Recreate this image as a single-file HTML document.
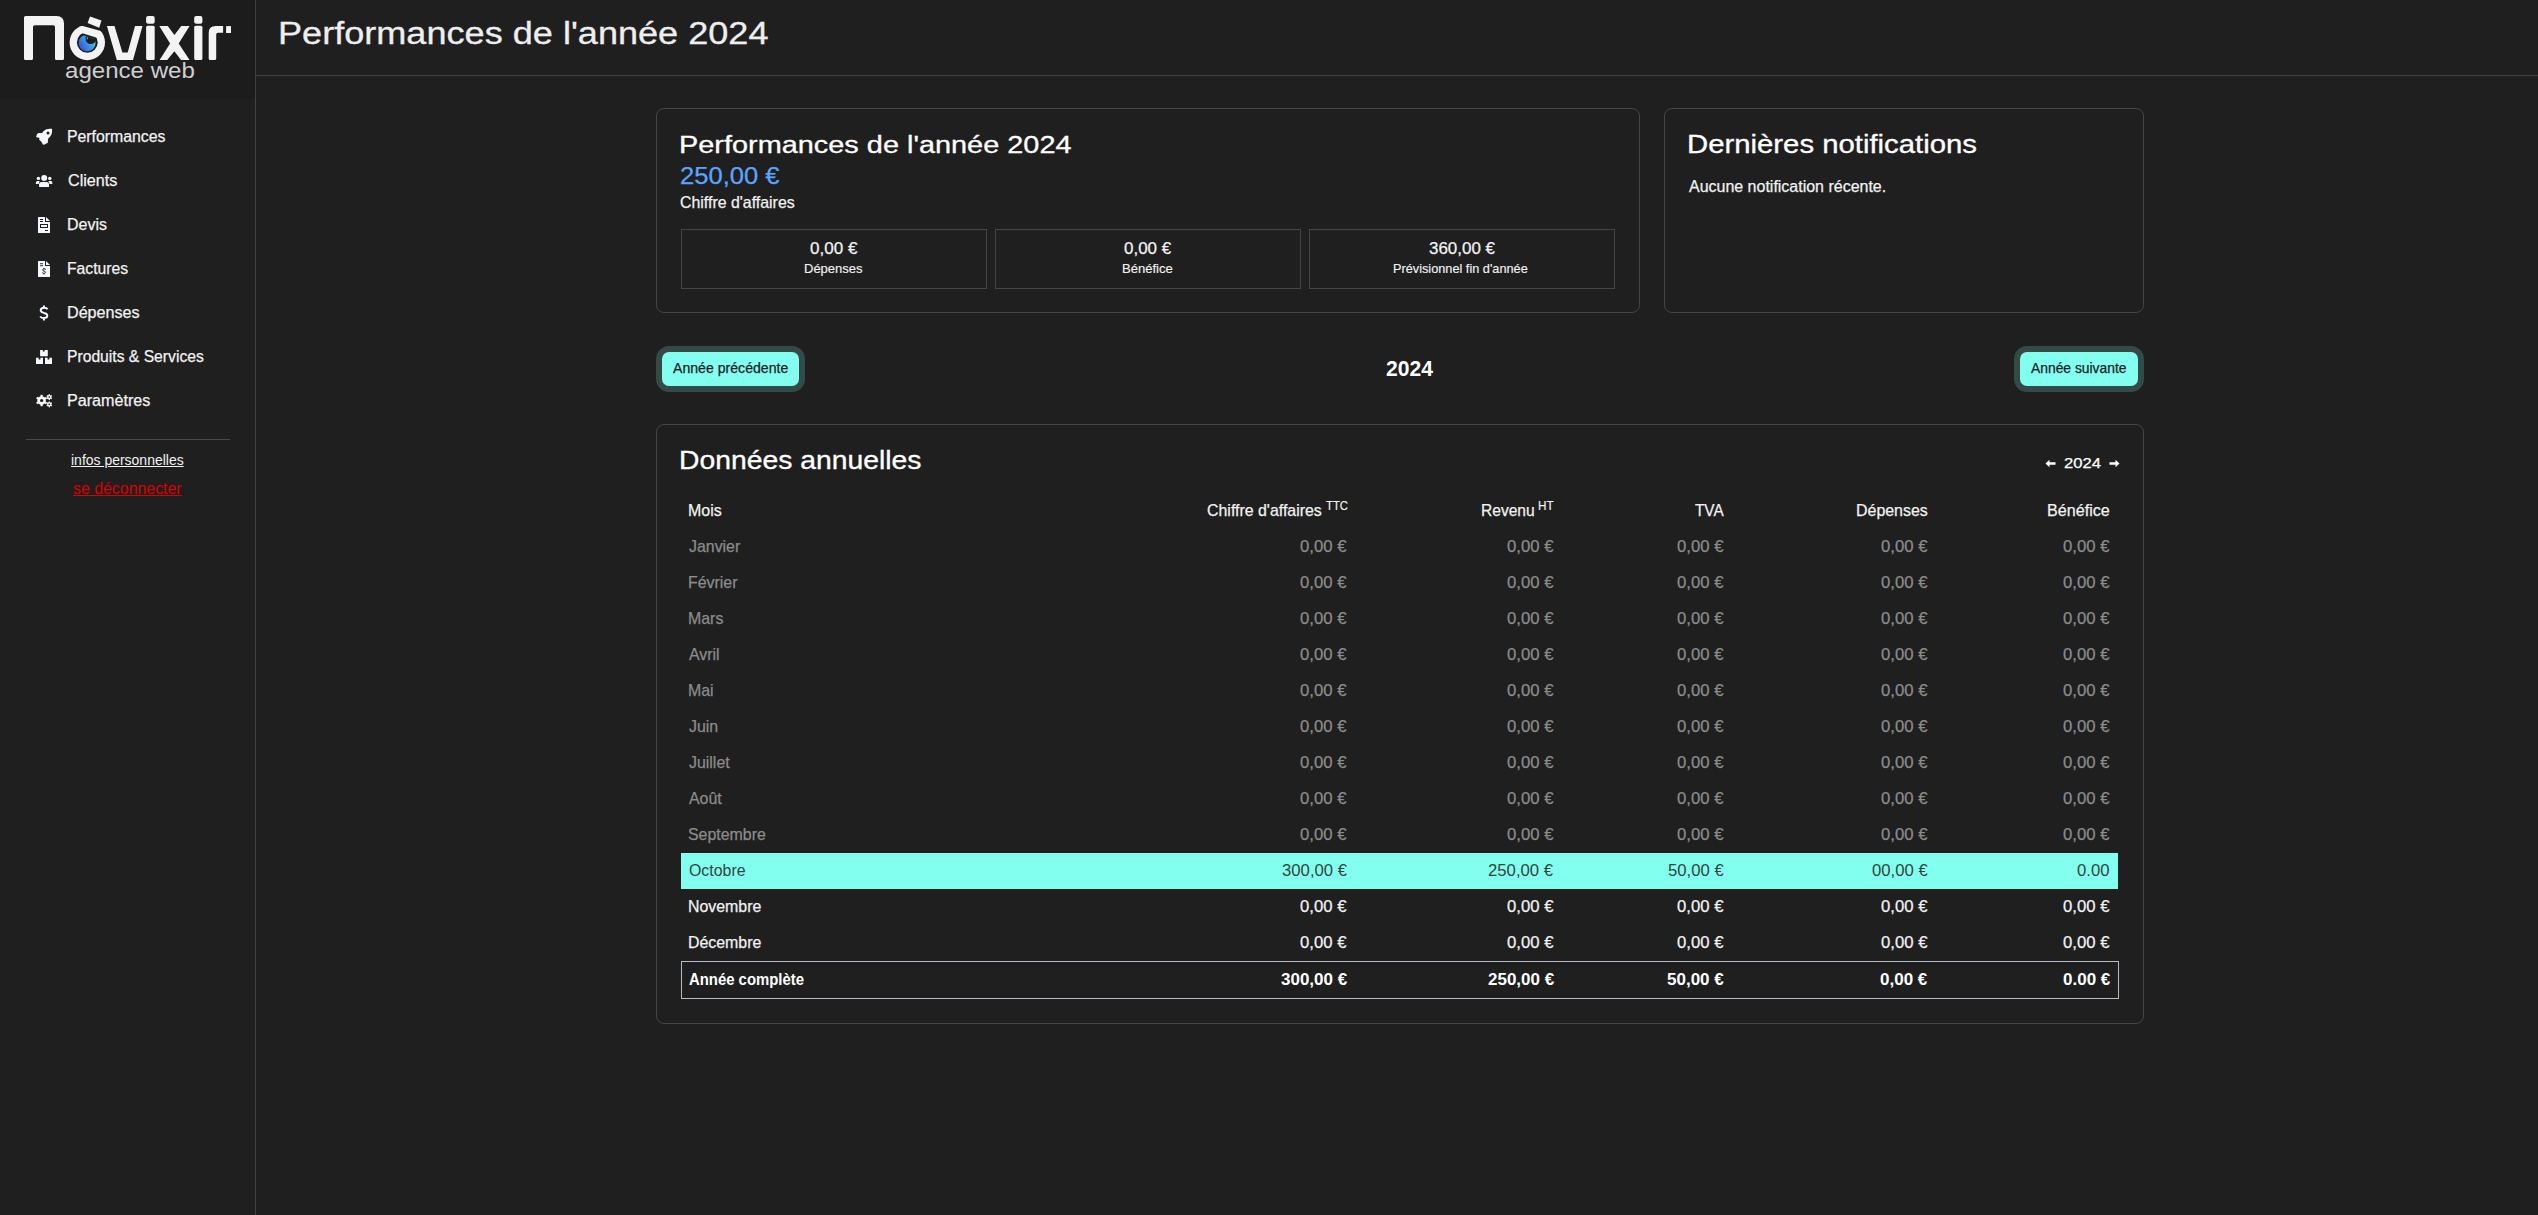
<!DOCTYPE html>
<html lang="fr">
<head>
<meta charset="utf-8">
<title>Performances de l'année 2024</title>
<style>
html,body{margin:0;padding:0;}
body{width:2538px;height:1215px;overflow:hidden;background:#1f1f1f;position:relative;font-family:"Liberation Sans",sans-serif;}
.t{position:absolute;white-space:pre;transform-origin:0 0;}
.abs{position:absolute;box-sizing:border-box;}
.logo-bg{left:0;top:0;width:255px;height:99px;background:#1c1c1c;}
.vline{left:255px;top:0;width:1px;height:1215px;background:#3f4242;}
.hline{left:256px;top:75px;width:2282px;height:1px;background:#3f4242;}
.card{border:1px solid #434648;border-radius:8px;}
.stat{border:1px solid #434648;}
.btn{background:#82ffee;border-radius:7px;box-shadow:0 0 0 6px #334a47;}
.hl{background:#82ffee;}
.tot{border:1px solid #b4bcc8;}
.sep{left:26px;top:439px;width:204px;height:1px;background:#4a4a4a;}
svg{position:absolute;overflow:visible;}
</style>
</head>
<body>
<div class="abs logo-bg"></div>
<div class="abs vline"></div>
<div class="abs hline"></div>

<!-- logo -->
<svg style="left:0;top:0" width="255" height="99" viewBox="0 0 255 99">
  <defs>
    <linearGradient id="iris" x1="0" y1="1" x2="1" y2="0.3">
      <stop offset="0" stop-color="#3a3fd4"/>
      <stop offset="1" stop-color="#3fd2e8"/>
    </linearGradient>
  </defs>
  <g fill="#f3f3f3">
    <!-- N -->
    <path d="M24,58.5 V17.5 Q24,16 25.5,16 H56.5 Q64,16 64,23.5 V58.5 Q64,60 62.5,60 H56.5 Q55,60 55,58.5 V27 Q55,25.2 53.2,25.2 H34.8 Q33,25.2 33,27 V58.5 Q33,60 31.5,60 H25.5 Q24,60 24,58.5 Z"/>
    <!-- v -->
    <path d="M106.9,26.1 H114.5 L122.4,52.5 H127.7 L135,26.1 H142.5 L133,60 H116.8 Z"/>
    <!-- i -->
    <rect x="146.1" y="15.9" width="8.6" height="7.9" rx="2"/>
    <rect x="146.1" y="25.8" width="8.6" height="34.2" rx="1.5"/>
    <!-- x -->
    <path d="M159.3,26.1 H167.8 L174.4,35 L181.3,26.1 H189.6 L178.7,43.6 L189.6,60 H181 L174.4,51.2 L167.2,60 H159.6 L170.1,43.6 Z"/>
    <!-- i -->
    <rect x="194.2" y="15.9" width="8.2" height="7.9" rx="2"/>
    <rect x="194.2" y="25.8" width="8.2" height="34.2" rx="1.5"/>
    <!-- r -->
    <path d="M208.7,58.5 V33 Q208.7,26.1 215.6,26.1 H223.1 V32.7 H218 Q216.2,32.7 216.2,34.5 V58.5 Q216.2,60 214.7,60 H210.2 Q208.7,60 208.7,58.5 Z"/>
    <rect x="226.1" y="26.1" width="4.9" height="6.9"/>
  </g>
  <defs>
    <clipPath id="ringclip"><path d="M50,17.05 L130,38.97 L130,80 L50,80 Z"/></clipPath>
    <clipPath id="holeflat"><path d="M60,26.18 L120,45.08 L120,80 L60,80 Z"/></clipPath>
    <clipPath id="irisflat"><path d="M60,27.9 L120,46.8 L120,80 L60,80 Z"/></clipPath>
  </defs>
  <g clip-path="url(#ringclip)">
    <circle cx="87.3" cy="42.5" r="17.7" fill="#f3f3f3"/>
  </g>
  <circle cx="87.3" cy="42.4" r="10.4" fill="#1c1c1c" clip-path="url(#holeflat)"/>
  <g clip-path="url(#irisflat)">
    <circle cx="87.1" cy="42.9" r="8.5" fill="url(#iris)"/>
    <circle cx="90.8" cy="38.8" r="5.3" fill="#1c1c1c"/>
    <circle cx="87.5" cy="37.2" r="0.6" fill="#3fb0e8"/>
    <circle cx="87.3" cy="38.7" r="0.7" fill="#3fb0e8"/>
  </g>
  <path d="M90,16.5 L101.5,20.6 L99.2,27.8 L87.6,23.1 Z" fill="#f3f3f3"/>
</svg>

<!-- sidebar icons -->
<svg style="left:32px;top:125px" width="24" height="24" viewBox="0 0 24 24">
  <path fill="#f4f7fb" d="M20,3.7 C17.5,3.6 15.2,3.9 13.8,4.6 L11.1,6.5 L10.3,7.9 L6.5,8.1 L5.1,9.1 L4,11.9 L7.5,13 L7.1,14.4 L9.3,16.8 L11.1,19.8 L12.6,19.6 L15.8,17.8 L16.2,13.4 L17.8,11.9 C18.9,10.6 19.5,9.5 19.8,8.3 C20.2,6.6 20.2,5 20,3.7 Z"/>
  <circle cx="16" cy="8.1" r="1.5" fill="#1f1f1f"/>
</svg>
<svg style="left:36px;top:175px" width="16" height="12" viewBox="0 0 16 12">
  <g fill="#f4f7fb">
    <circle cx="8.2" cy="3.1" r="3"/>
    <path d="M3.1,12 L3.1,9.2 C3.1,7.8 4.2,6.9 5.6,6.9 L10.6,6.9 C12,6.9 13,7.8 13,9.2 L13,12 Z"/>
    <circle cx="2.4" cy="3.4" r="1.7"/>
    <circle cx="13.8" cy="3.4" r="1.7"/>
    <path d="M-0.1,9 L-0.1,7.6 C-0.1,6.6 0.7,5.9 1.8,5.9 L3.9,5.9 C3.2,6.6 2.8,7.6 2.7,9 Z"/>
    <path d="M16.3,9 L16.3,7.6 C16.3,6.6 15.5,5.9 14.4,5.9 L12.3,5.9 C13,6.6 13.4,7.6 13.5,9 Z"/>
  </g>
</svg>
<svg style="left:38px;top:217px" width="12" height="16" viewBox="0 0 12 16">
  <path fill="#f4f7fb" d="M0.6,0 H7 V5 H12 V15.4 Q12,16 11.4,16 H0.6 Q0,16 0,15.4 V0.6 Q0,0 0.6,0 Z M8,0 L12,4 H8 Z"/>
  <g fill="#1f1f1f">
    <rect x="2" y="2" width="3" height="1"/>
    <rect x="2" y="4" width="3" height="1"/>
    <path fill-rule="evenodd" d="M2,7 H10 V11 H2 Z M3,8 V10 H9 V8 Z"/>
    <rect x="7" y="13" width="3" height="1"/>
  </g>
</svg>
<svg style="left:38px;top:261px" width="12" height="16" viewBox="0 0 12 16">
  <path fill="#f4f7fb" d="M0.6,0 H7 V5 H12 V15.4 Q12,16 11.4,16 H0.6 Q0,16 0,15.4 V0.6 Q0,0 0.6,0 Z M8,0 L12,4 H8 Z"/>
  <g fill="#1f1f1f">
    <rect x="2" y="2.3" width="3" height="0.9"/>
    <rect x="2" y="4.3" width="3" height="0.9"/>
  </g>
  <path d="M7.8,8.6 C7.4,8.1 6.8,7.9 6.1,7.9 C5.2,7.9 4.6,8.4 4.6,9 C4.6,9.7 5.3,9.9 6,10.1 C6.8,10.3 7.5,10.5 7.5,11.3 C7.5,12 6.9,12.4 6,12.4 C5.3,12.4 4.7,12.1 4.3,11.7 M6,7 V7.9 M6,12.4 V13.4" stroke="#1f1f1f" stroke-width="1" fill="none"/>
</svg>
<svg style="left:39px;top:305px" width="10" height="16" viewBox="0 0 10 16">
  <path d="M8.6,4.2 C8,3.3 6.9,2.8 5.1,2.8 C3,2.8 1.7,3.8 1.7,5.3 C1.7,7 3.3,7.5 5,7.9 C7,8.3 8.3,8.9 8.3,10.6 C8.3,12.1 7,13.1 4.9,13.1 C3.2,13.1 1.9,12.5 1.1,11.5 M4.9,0.4 V2.8 M4.9,13.1 V15.6" stroke="#f4f7fb" stroke-width="2" fill="none"/>
</svg>
<svg style="left:36px;top:350px" width="16" height="14" viewBox="0 0 16 14">
  <g fill="#f4f7fb">
    <path d="M4.1,0 H6.8 V1.6 H8.6 V0 H11.8 V6.2 H4.1 Z"/>
    <path d="M0,7.8 H2.6 V9.4 H4.4 V7.8 H7 V14 H0 Z"/>
    <path d="M9,7.8 H11.6 V9.4 H13.4 V7.8 H16 V14 H9 Z"/>
  </g>
</svg>
<svg style="left:36px;top:394px" width="16" height="13" viewBox="0 0 16 13">
  <g fill="#f4f7fb">
    <g transform="translate(5.6 6.5)">
      <circle r="4.3"/>
      <rect x="-1.1" y="-5.7" width="2.2" height="11.4"/>
      <rect x="-1.1" y="-5.7" width="2.2" height="11.4" transform="rotate(60)"/>
      <rect x="-1.1" y="-5.7" width="2.2" height="11.4" transform="rotate(120)"/>
      <circle r="1.6" fill="#1f1f1f"/>
    </g>
    <g transform="translate(13.3 3.1)">
      <circle r="2.1"/>
      <rect x="-0.7" y="-2.9" width="1.4" height="5.8"/>
      <rect x="-0.7" y="-2.9" width="1.4" height="5.8" transform="rotate(60)"/>
      <rect x="-0.7" y="-2.9" width="1.4" height="5.8" transform="rotate(120)"/>
      <circle r="0.8" fill="#1f1f1f"/>
    </g>
    <g transform="translate(13.3 10.4)">
      <circle r="2.1"/>
      <rect x="-0.7" y="-2.9" width="1.4" height="5.8"/>
      <rect x="-0.7" y="-2.9" width="1.4" height="5.8" transform="rotate(60)"/>
      <rect x="-0.7" y="-2.9" width="1.4" height="5.8" transform="rotate(120)"/>
      <circle r="0.8" fill="#1f1f1f"/>
    </g>
  </g>
</svg>
<div class="abs sep"></div>

<!-- cards -->
<div class="abs card" style="left:656px;top:108px;width:984px;height:205px;"></div>
<div class="abs stat" style="left:681px;top:229px;width:306px;height:60px;"></div>
<div class="abs stat" style="left:995px;top:229px;width:306px;height:60px;"></div>
<div class="abs stat" style="left:1309px;top:229px;width:306px;height:60px;"></div>
<div class="abs card" style="left:1664px;top:108px;width:480px;height:205px;"></div>

<!-- buttons -->
<div class="abs btn" style="left:662px;top:352px;width:137px;height:34px;"></div>
<div class="abs btn" style="left:2020px;top:352px;width:118px;height:34px;"></div>

<!-- data card -->
<div class="abs card" style="left:656px;top:424px;width:1488px;height:600px;"></div>
<div class="abs hl" style="left:681px;top:853px;width:1437px;height:36px;"></div>
<div class="abs tot" style="left:681px;top:961px;width:1438px;height:38px;"></div>

<!-- arrows -->
<svg style="left:2045px;top:459px" width="11" height="9" viewBox="0 0 11 9">
  <path fill="#ffffff" d="M0.5,4.5 L4.5,0.8 V3.3 H10.5 V5.7 H4.5 V8.2 Z"/>
</svg>
<svg style="left:2109px;top:459px" width="11" height="9" viewBox="0 0 11 9">
  <path fill="#ffffff" d="M10.5,4.5 L6.5,0.8 V3.3 H0.5 V5.7 H6.5 V8.2 Z"/>
</svg>

<span class="t" style="left:277.96px;top:19.20px;font-size:30.8px;line-height:30.8px;font-weight:400;color:#eeeeee;transform:scaleX(1.1721);-webkit-text-stroke:0.3px #eeeeee;">Performances de l&#x27;année 2024</span>
<span class="t" style="left:67.11px;top:129.00px;font-size:16px;line-height:16px;font-weight:400;color:#f2f2f2;transform:scaleX(0.9888);-webkit-text-stroke:0.25px #f2f2f2;">Performances</span>
<span class="t" style="left:68.10px;top:173.00px;font-size:16px;line-height:16px;font-weight:400;color:#f2f2f2;transform:scaleX(1.0084);-webkit-text-stroke:0.25px #f2f2f2;">Clients</span>
<span class="t" style="left:67.10px;top:217.00px;font-size:16px;line-height:16px;font-weight:400;color:#f2f2f2;transform:scaleX(0.9974);-webkit-text-stroke:0.25px #f2f2f2;">Devis</span>
<span class="t" style="left:67.12px;top:261.00px;font-size:16px;line-height:16px;font-weight:400;color:#f2f2f2;transform:scaleX(0.9820);-webkit-text-stroke:0.25px #f2f2f2;">Factures</span>
<span class="t" style="left:67.09px;top:305.00px;font-size:16px;line-height:16px;font-weight:400;color:#f2f2f2;transform:scaleX(1.0084);-webkit-text-stroke:0.25px #f2f2f2;">Dépenses</span>
<span class="t" style="left:67.12px;top:349.00px;font-size:16px;line-height:16px;font-weight:400;color:#f2f2f2;transform:scaleX(0.9797);-webkit-text-stroke:0.25px #f2f2f2;">Produits &amp; Services</span>
<span class="t" style="left:67.09px;top:393.00px;font-size:16px;line-height:16px;font-weight:400;color:#f2f2f2;transform:scaleX(1.0084);-webkit-text-stroke:0.25px #f2f2f2;">Paramètres</span>
<span class="t" style="left:70.60px;top:453.10px;font-size:14px;line-height:14px;font-weight:400;color:#f2f2f2;transform:scaleX(0.9982);text-decoration:underline;">infos personnelles</span>
<span class="t" style="left:73.30px;top:481.10px;font-size:16px;line-height:16px;font-weight:400;color:#d90000;transform:scaleX(0.9927);text-decoration:underline;">se déconnecter</span>
<span class="t" style="left:678.96px;top:132.90px;font-size:24.7px;line-height:24.7px;font-weight:400;color:#ffffff;transform:scaleX(1.1700);-webkit-text-stroke:0.3px #ffffff;">Performances de l&#x27;année 2024</span>
<span class="t" style="left:679.93px;top:164.30px;font-size:24px;line-height:24px;font-weight:400;color:#5ca4ff;transform:scaleX(1.0652);-webkit-text-stroke:0.25px #5ca4ff;">250,00 €</span>
<span class="t" style="left:680.04px;top:194.40px;font-size:16.5px;line-height:16.5px;font-weight:400;color:#f2f2f2;transform:scaleX(0.9636);-webkit-text-stroke:0.25px #f2f2f2;">Chiffre d&#x27;affaires</span>
<span class="t" style="left:809.80px;top:239.50px;font-size:16.5px;line-height:16.5px;font-weight:400;color:#f2f2f2;transform:scaleX(1.0326);-webkit-text-stroke:0.25px #f2f2f2;">0,00 €</span>
<span class="t" style="left:804.00px;top:262.30px;font-size:13px;line-height:13px;font-weight:400;color:#f2f2f2;transform:scaleX(1.0000);-webkit-text-stroke:0.15px #f2f2f2;">Dépenses</span>
<span class="t" style="left:1123.60px;top:239.50px;font-size:16.5px;line-height:16.5px;font-weight:400;color:#f2f2f2;transform:scaleX(1.0283);-webkit-text-stroke:0.25px #f2f2f2;">0,00 €</span>
<span class="t" style="left:1121.90px;top:262.30px;font-size:13px;line-height:13px;font-weight:400;color:#f2f2f2;transform:scaleX(1.0041);-webkit-text-stroke:0.15px #f2f2f2;">Bénéfice</span>
<span class="t" style="left:1428.60px;top:239.50px;font-size:16.5px;line-height:16.5px;font-weight:400;color:#f2f2f2;transform:scaleX(1.0266);-webkit-text-stroke:0.25px #f2f2f2;">360,00 €</span>
<span class="t" style="left:1393.32px;top:262.30px;font-size:13px;line-height:13px;font-weight:400;color:#f2f2f2;transform:scaleX(0.9788);-webkit-text-stroke:0.15px #f2f2f2;">Prévisionnel fin d&#x27;année</span>
<span class="t" style="left:1686.87px;top:132.30px;font-size:25.2px;line-height:25.2px;font-weight:400;color:#ffffff;transform:scaleX(1.1636);-webkit-text-stroke:0.3px #ffffff;">Dernières notifications</span>
<span class="t" style="left:1689.00px;top:179.40px;font-size:16px;line-height:16px;font-weight:400;color:#f2f2f2;transform:scaleX(0.9985);-webkit-text-stroke:0.25px #f2f2f2;">Aucune notification récente.</span>
<span class="t" style="left:672.60px;top:360.80px;font-size:14px;line-height:14px;font-weight:400;color:#1c1c2a;transform:scaleX(1.0079);-webkit-text-stroke:0.25px #1c1c2a;">Année précédente</span>
<span class="t" style="left:1385.80px;top:358.80px;font-size:21.5px;line-height:21.5px;font-weight:700;color:#ffffff;transform:scaleX(0.9792);">2024</span>
<span class="t" style="left:2031.00px;top:360.90px;font-size:14px;line-height:14px;font-weight:400;color:#1c1c2a;transform:scaleX(0.9896);-webkit-text-stroke:0.25px #1c1c2a;">Année suivante</span>
<span class="t" style="left:678.75px;top:447.80px;font-size:25.2px;line-height:25.2px;font-weight:400;color:#ffffff;transform:scaleX(1.1239);-webkit-text-stroke:0.3px #ffffff;">Données annuelles</span>
<span class="t" style="left:2064.10px;top:455.00px;font-size:15.2px;line-height:15.2px;font-weight:400;color:#ffffff;transform:scaleX(1.0941);-webkit-text-stroke:0.25px #ffffff;">2024</span>
<span class="t" style="left:688.03px;top:502.00px;font-size:16.4px;line-height:16.4px;font-weight:400;color:#f2f2f2;transform:scaleX(0.9735);-webkit-text-stroke:0.25px #f2f2f2;">Mois</span>
<span class="t" style="left:1206.73px;top:502.00px;font-size:16.4px;line-height:16.4px;font-weight:400;color:#f2f2f2;transform:scaleX(0.9709);-webkit-text-stroke:0.25px #f2f2f2;">Chiffre d&#x27;affaires</span>
<span class="t" style="left:1326.00px;top:500.10px;font-size:12px;line-height:12px;font-weight:400;color:#f2f2f2;transform:scaleX(0.9435);-webkit-text-stroke:0.15px #f2f2f2;">TTC</span>
<span class="t" style="left:1481.05px;top:502.00px;font-size:16.4px;line-height:16.4px;font-weight:400;color:#f2f2f2;transform:scaleX(0.9491);-webkit-text-stroke:0.25px #f2f2f2;">Revenu</span>
<span class="t" style="left:1538.02px;top:500.00px;font-size:12px;line-height:12px;font-weight:400;color:#f2f2f2;transform:scaleX(0.9800);-webkit-text-stroke:0.15px #f2f2f2;">HT</span>
<span class="t" style="left:1695.00px;top:502.00px;font-size:16.4px;line-height:16.4px;font-weight:400;color:#f2f2f2;transform:scaleX(0.9355);-webkit-text-stroke:0.25px #f2f2f2;">TVA</span>
<span class="t" style="left:1855.73px;top:502.00px;font-size:16.4px;line-height:16.4px;font-weight:400;color:#f2f2f2;transform:scaleX(0.9726);-webkit-text-stroke:0.25px #f2f2f2;">Dépenses</span>
<span class="t" style="left:2046.82px;top:502.00px;font-size:16.4px;line-height:16.4px;font-weight:400;color:#f2f2f2;transform:scaleX(0.9841);-webkit-text-stroke:0.25px #f2f2f2;">Bénéfice</span>
<span class="t" style="left:64.66px;top:59.50px;font-size:21.2px;line-height:21.2px;font-weight:400;color:#cfcfcf;transform:scaleX(1.1363);">agence web</span>
<span class="t" style="left:689.20px;top:538.20px;font-size:16.4px;line-height:16.4px;font-weight:400;color:#8c8c8c;transform:scaleX(0.9699);-webkit-text-stroke:0.25px #8c8c8c;">Janvier</span>
<span class="t" style="left:1300.20px;top:538.20px;font-size:16.4px;line-height:16.4px;font-weight:400;color:#8c8c8c;transform:scaleX(1.0196);-webkit-text-stroke:0.25px #8c8c8c;">0,00 €</span>
<span class="t" style="left:1506.80px;top:538.20px;font-size:16.4px;line-height:16.4px;font-weight:400;color:#8c8c8c;transform:scaleX(1.0196);-webkit-text-stroke:0.25px #8c8c8c;">0,00 €</span>
<span class="t" style="left:1677.10px;top:538.20px;font-size:16.4px;line-height:16.4px;font-weight:400;color:#8c8c8c;transform:scaleX(1.0196);-webkit-text-stroke:0.25px #8c8c8c;">0,00 €</span>
<span class="t" style="left:1880.80px;top:538.20px;font-size:16.4px;line-height:16.4px;font-weight:400;color:#8c8c8c;transform:scaleX(1.0196);-webkit-text-stroke:0.25px #8c8c8c;">0,00 €</span>
<span class="t" style="left:2062.90px;top:538.20px;font-size:16.4px;line-height:16.4px;font-weight:400;color:#8c8c8c;transform:scaleX(1.0196);-webkit-text-stroke:0.25px #8c8c8c;">0,00 €</span>
<span class="t" style="left:688.23px;top:574.20px;font-size:16.4px;line-height:16.4px;font-weight:400;color:#8c8c8c;transform:scaleX(0.9699);-webkit-text-stroke:0.25px #8c8c8c;">Février</span>
<span class="t" style="left:1300.20px;top:574.20px;font-size:16.4px;line-height:16.4px;font-weight:400;color:#8c8c8c;transform:scaleX(1.0196);-webkit-text-stroke:0.25px #8c8c8c;">0,00 €</span>
<span class="t" style="left:1506.80px;top:574.20px;font-size:16.4px;line-height:16.4px;font-weight:400;color:#8c8c8c;transform:scaleX(1.0196);-webkit-text-stroke:0.25px #8c8c8c;">0,00 €</span>
<span class="t" style="left:1677.10px;top:574.20px;font-size:16.4px;line-height:16.4px;font-weight:400;color:#8c8c8c;transform:scaleX(1.0196);-webkit-text-stroke:0.25px #8c8c8c;">0,00 €</span>
<span class="t" style="left:1880.80px;top:574.20px;font-size:16.4px;line-height:16.4px;font-weight:400;color:#8c8c8c;transform:scaleX(1.0196);-webkit-text-stroke:0.25px #8c8c8c;">0,00 €</span>
<span class="t" style="left:2062.90px;top:574.20px;font-size:16.4px;line-height:16.4px;font-weight:400;color:#8c8c8c;transform:scaleX(1.0196);-webkit-text-stroke:0.25px #8c8c8c;">0,00 €</span>
<span class="t" style="left:688.23px;top:610.20px;font-size:16.4px;line-height:16.4px;font-weight:400;color:#8c8c8c;transform:scaleX(0.9699);-webkit-text-stroke:0.25px #8c8c8c;">Mars</span>
<span class="t" style="left:1300.20px;top:610.20px;font-size:16.4px;line-height:16.4px;font-weight:400;color:#8c8c8c;transform:scaleX(1.0196);-webkit-text-stroke:0.25px #8c8c8c;">0,00 €</span>
<span class="t" style="left:1506.80px;top:610.20px;font-size:16.4px;line-height:16.4px;font-weight:400;color:#8c8c8c;transform:scaleX(1.0196);-webkit-text-stroke:0.25px #8c8c8c;">0,00 €</span>
<span class="t" style="left:1677.10px;top:610.20px;font-size:16.4px;line-height:16.4px;font-weight:400;color:#8c8c8c;transform:scaleX(1.0196);-webkit-text-stroke:0.25px #8c8c8c;">0,00 €</span>
<span class="t" style="left:1880.80px;top:610.20px;font-size:16.4px;line-height:16.4px;font-weight:400;color:#8c8c8c;transform:scaleX(1.0196);-webkit-text-stroke:0.25px #8c8c8c;">0,00 €</span>
<span class="t" style="left:2062.90px;top:610.20px;font-size:16.4px;line-height:16.4px;font-weight:400;color:#8c8c8c;transform:scaleX(1.0196);-webkit-text-stroke:0.25px #8c8c8c;">0,00 €</span>
<span class="t" style="left:689.20px;top:646.20px;font-size:16.4px;line-height:16.4px;font-weight:400;color:#8c8c8c;transform:scaleX(0.9699);-webkit-text-stroke:0.25px #8c8c8c;">Avril</span>
<span class="t" style="left:1300.20px;top:646.20px;font-size:16.4px;line-height:16.4px;font-weight:400;color:#8c8c8c;transform:scaleX(1.0196);-webkit-text-stroke:0.25px #8c8c8c;">0,00 €</span>
<span class="t" style="left:1506.80px;top:646.20px;font-size:16.4px;line-height:16.4px;font-weight:400;color:#8c8c8c;transform:scaleX(1.0196);-webkit-text-stroke:0.25px #8c8c8c;">0,00 €</span>
<span class="t" style="left:1677.10px;top:646.20px;font-size:16.4px;line-height:16.4px;font-weight:400;color:#8c8c8c;transform:scaleX(1.0196);-webkit-text-stroke:0.25px #8c8c8c;">0,00 €</span>
<span class="t" style="left:1880.80px;top:646.20px;font-size:16.4px;line-height:16.4px;font-weight:400;color:#8c8c8c;transform:scaleX(1.0196);-webkit-text-stroke:0.25px #8c8c8c;">0,00 €</span>
<span class="t" style="left:2062.90px;top:646.20px;font-size:16.4px;line-height:16.4px;font-weight:400;color:#8c8c8c;transform:scaleX(1.0196);-webkit-text-stroke:0.25px #8c8c8c;">0,00 €</span>
<span class="t" style="left:688.23px;top:682.20px;font-size:16.4px;line-height:16.4px;font-weight:400;color:#8c8c8c;transform:scaleX(0.9699);-webkit-text-stroke:0.25px #8c8c8c;">Mai</span>
<span class="t" style="left:1300.20px;top:682.20px;font-size:16.4px;line-height:16.4px;font-weight:400;color:#8c8c8c;transform:scaleX(1.0196);-webkit-text-stroke:0.25px #8c8c8c;">0,00 €</span>
<span class="t" style="left:1506.80px;top:682.20px;font-size:16.4px;line-height:16.4px;font-weight:400;color:#8c8c8c;transform:scaleX(1.0196);-webkit-text-stroke:0.25px #8c8c8c;">0,00 €</span>
<span class="t" style="left:1677.10px;top:682.20px;font-size:16.4px;line-height:16.4px;font-weight:400;color:#8c8c8c;transform:scaleX(1.0196);-webkit-text-stroke:0.25px #8c8c8c;">0,00 €</span>
<span class="t" style="left:1880.80px;top:682.20px;font-size:16.4px;line-height:16.4px;font-weight:400;color:#8c8c8c;transform:scaleX(1.0196);-webkit-text-stroke:0.25px #8c8c8c;">0,00 €</span>
<span class="t" style="left:2062.90px;top:682.20px;font-size:16.4px;line-height:16.4px;font-weight:400;color:#8c8c8c;transform:scaleX(1.0196);-webkit-text-stroke:0.25px #8c8c8c;">0,00 €</span>
<span class="t" style="left:689.20px;top:718.20px;font-size:16.4px;line-height:16.4px;font-weight:400;color:#8c8c8c;transform:scaleX(0.9699);-webkit-text-stroke:0.25px #8c8c8c;">Juin</span>
<span class="t" style="left:1300.20px;top:718.20px;font-size:16.4px;line-height:16.4px;font-weight:400;color:#8c8c8c;transform:scaleX(1.0196);-webkit-text-stroke:0.25px #8c8c8c;">0,00 €</span>
<span class="t" style="left:1506.80px;top:718.20px;font-size:16.4px;line-height:16.4px;font-weight:400;color:#8c8c8c;transform:scaleX(1.0196);-webkit-text-stroke:0.25px #8c8c8c;">0,00 €</span>
<span class="t" style="left:1677.10px;top:718.20px;font-size:16.4px;line-height:16.4px;font-weight:400;color:#8c8c8c;transform:scaleX(1.0196);-webkit-text-stroke:0.25px #8c8c8c;">0,00 €</span>
<span class="t" style="left:1880.80px;top:718.20px;font-size:16.4px;line-height:16.4px;font-weight:400;color:#8c8c8c;transform:scaleX(1.0196);-webkit-text-stroke:0.25px #8c8c8c;">0,00 €</span>
<span class="t" style="left:2062.90px;top:718.20px;font-size:16.4px;line-height:16.4px;font-weight:400;color:#8c8c8c;transform:scaleX(1.0196);-webkit-text-stroke:0.25px #8c8c8c;">0,00 €</span>
<span class="t" style="left:689.20px;top:754.20px;font-size:16.4px;line-height:16.4px;font-weight:400;color:#8c8c8c;transform:scaleX(0.9699);-webkit-text-stroke:0.25px #8c8c8c;">Juillet</span>
<span class="t" style="left:1300.20px;top:754.20px;font-size:16.4px;line-height:16.4px;font-weight:400;color:#8c8c8c;transform:scaleX(1.0196);-webkit-text-stroke:0.25px #8c8c8c;">0,00 €</span>
<span class="t" style="left:1506.80px;top:754.20px;font-size:16.4px;line-height:16.4px;font-weight:400;color:#8c8c8c;transform:scaleX(1.0196);-webkit-text-stroke:0.25px #8c8c8c;">0,00 €</span>
<span class="t" style="left:1677.10px;top:754.20px;font-size:16.4px;line-height:16.4px;font-weight:400;color:#8c8c8c;transform:scaleX(1.0196);-webkit-text-stroke:0.25px #8c8c8c;">0,00 €</span>
<span class="t" style="left:1880.80px;top:754.20px;font-size:16.4px;line-height:16.4px;font-weight:400;color:#8c8c8c;transform:scaleX(1.0196);-webkit-text-stroke:0.25px #8c8c8c;">0,00 €</span>
<span class="t" style="left:2062.90px;top:754.20px;font-size:16.4px;line-height:16.4px;font-weight:400;color:#8c8c8c;transform:scaleX(1.0196);-webkit-text-stroke:0.25px #8c8c8c;">0,00 €</span>
<span class="t" style="left:689.20px;top:790.20px;font-size:16.4px;line-height:16.4px;font-weight:400;color:#8c8c8c;transform:scaleX(0.9699);-webkit-text-stroke:0.25px #8c8c8c;">Août</span>
<span class="t" style="left:1300.20px;top:790.20px;font-size:16.4px;line-height:16.4px;font-weight:400;color:#8c8c8c;transform:scaleX(1.0196);-webkit-text-stroke:0.25px #8c8c8c;">0,00 €</span>
<span class="t" style="left:1506.80px;top:790.20px;font-size:16.4px;line-height:16.4px;font-weight:400;color:#8c8c8c;transform:scaleX(1.0196);-webkit-text-stroke:0.25px #8c8c8c;">0,00 €</span>
<span class="t" style="left:1677.10px;top:790.20px;font-size:16.4px;line-height:16.4px;font-weight:400;color:#8c8c8c;transform:scaleX(1.0196);-webkit-text-stroke:0.25px #8c8c8c;">0,00 €</span>
<span class="t" style="left:1880.80px;top:790.20px;font-size:16.4px;line-height:16.4px;font-weight:400;color:#8c8c8c;transform:scaleX(1.0196);-webkit-text-stroke:0.25px #8c8c8c;">0,00 €</span>
<span class="t" style="left:2062.90px;top:790.20px;font-size:16.4px;line-height:16.4px;font-weight:400;color:#8c8c8c;transform:scaleX(1.0196);-webkit-text-stroke:0.25px #8c8c8c;">0,00 €</span>
<span class="t" style="left:688.23px;top:826.20px;font-size:16.4px;line-height:16.4px;font-weight:400;color:#8c8c8c;transform:scaleX(0.9699);-webkit-text-stroke:0.25px #8c8c8c;">Septembre</span>
<span class="t" style="left:1300.20px;top:826.20px;font-size:16.4px;line-height:16.4px;font-weight:400;color:#8c8c8c;transform:scaleX(1.0196);-webkit-text-stroke:0.25px #8c8c8c;">0,00 €</span>
<span class="t" style="left:1506.80px;top:826.20px;font-size:16.4px;line-height:16.4px;font-weight:400;color:#8c8c8c;transform:scaleX(1.0196);-webkit-text-stroke:0.25px #8c8c8c;">0,00 €</span>
<span class="t" style="left:1677.10px;top:826.20px;font-size:16.4px;line-height:16.4px;font-weight:400;color:#8c8c8c;transform:scaleX(1.0196);-webkit-text-stroke:0.25px #8c8c8c;">0,00 €</span>
<span class="t" style="left:1880.80px;top:826.20px;font-size:16.4px;line-height:16.4px;font-weight:400;color:#8c8c8c;transform:scaleX(1.0196);-webkit-text-stroke:0.25px #8c8c8c;">0,00 €</span>
<span class="t" style="left:2062.90px;top:826.20px;font-size:16.4px;line-height:16.4px;font-weight:400;color:#8c8c8c;transform:scaleX(1.0196);-webkit-text-stroke:0.25px #8c8c8c;">0,00 €</span>
<span class="t" style="left:689.20px;top:862.20px;font-size:16.4px;line-height:16.4px;font-weight:400;color:#35433f;transform:scaleX(0.9699);">Octobre</span>
<span class="t" style="left:1281.85px;top:862.20px;font-size:16.4px;line-height:16.4px;font-weight:400;color:#35433f;transform:scaleX(1.0196);">300,00 €</span>
<span class="t" style="left:1488.45px;top:862.20px;font-size:16.4px;line-height:16.4px;font-weight:400;color:#35433f;transform:scaleX(1.0196);">250,00 €</span>
<span class="t" style="left:1667.92px;top:862.20px;font-size:16.4px;line-height:16.4px;font-weight:400;color:#35433f;transform:scaleX(1.0196);">50,00 €</span>
<span class="t" style="left:1871.62px;top:862.20px;font-size:16.4px;line-height:16.4px;font-weight:400;color:#35433f;transform:scaleX(1.0196);">00,00 €</span>
<span class="t" style="left:2077.17px;top:862.20px;font-size:16.4px;line-height:16.4px;font-weight:400;color:#35433f;transform:scaleX(1.0196);">0.00</span>
<span class="t" style="left:688.23px;top:898.20px;font-size:16.4px;line-height:16.4px;font-weight:400;color:#f2f2f2;transform:scaleX(0.9699);-webkit-text-stroke:0.25px #f2f2f2;">Novembre</span>
<span class="t" style="left:1300.20px;top:898.20px;font-size:16.4px;line-height:16.4px;font-weight:400;color:#f2f2f2;transform:scaleX(1.0196);-webkit-text-stroke:0.25px #f2f2f2;">0,00 €</span>
<span class="t" style="left:1506.80px;top:898.20px;font-size:16.4px;line-height:16.4px;font-weight:400;color:#f2f2f2;transform:scaleX(1.0196);-webkit-text-stroke:0.25px #f2f2f2;">0,00 €</span>
<span class="t" style="left:1677.10px;top:898.20px;font-size:16.4px;line-height:16.4px;font-weight:400;color:#f2f2f2;transform:scaleX(1.0196);-webkit-text-stroke:0.25px #f2f2f2;">0,00 €</span>
<span class="t" style="left:1880.80px;top:898.20px;font-size:16.4px;line-height:16.4px;font-weight:400;color:#f2f2f2;transform:scaleX(1.0196);-webkit-text-stroke:0.25px #f2f2f2;">0,00 €</span>
<span class="t" style="left:2062.90px;top:898.20px;font-size:16.4px;line-height:16.4px;font-weight:400;color:#f2f2f2;transform:scaleX(1.0196);-webkit-text-stroke:0.25px #f2f2f2;">0,00 €</span>
<span class="t" style="left:688.23px;top:934.20px;font-size:16.4px;line-height:16.4px;font-weight:400;color:#f2f2f2;transform:scaleX(0.9699);-webkit-text-stroke:0.25px #f2f2f2;">Décembre</span>
<span class="t" style="left:1300.20px;top:934.20px;font-size:16.4px;line-height:16.4px;font-weight:400;color:#f2f2f2;transform:scaleX(1.0196);-webkit-text-stroke:0.25px #f2f2f2;">0,00 €</span>
<span class="t" style="left:1506.80px;top:934.20px;font-size:16.4px;line-height:16.4px;font-weight:400;color:#f2f2f2;transform:scaleX(1.0196);-webkit-text-stroke:0.25px #f2f2f2;">0,00 €</span>
<span class="t" style="left:1677.10px;top:934.20px;font-size:16.4px;line-height:16.4px;font-weight:400;color:#f2f2f2;transform:scaleX(1.0196);-webkit-text-stroke:0.25px #f2f2f2;">0,00 €</span>
<span class="t" style="left:1880.80px;top:934.20px;font-size:16.4px;line-height:16.4px;font-weight:400;color:#f2f2f2;transform:scaleX(1.0196);-webkit-text-stroke:0.25px #f2f2f2;">0,00 €</span>
<span class="t" style="left:2062.90px;top:934.20px;font-size:16.4px;line-height:16.4px;font-weight:400;color:#f2f2f2;transform:scaleX(1.0196);-webkit-text-stroke:0.25px #f2f2f2;">0,00 €</span>
<span class="t" style="left:689.30px;top:971.30px;font-size:16.4px;line-height:16.4px;font-weight:700;color:#ffffff;transform:scaleX(0.9079);">Année complète</span>
<span class="t" style="left:1281.33px;top:971.30px;font-size:16.4px;line-height:16.4px;font-weight:700;color:#ffffff;transform:scaleX(1.0370);">300,00 €</span>
<span class="t" style="left:1487.83px;top:971.30px;font-size:16.4px;line-height:16.4px;font-weight:700;color:#ffffff;transform:scaleX(1.0370);">250,00 €</span>
<span class="t" style="left:1667.27px;top:971.30px;font-size:16.4px;line-height:16.4px;font-weight:700;color:#ffffff;transform:scaleX(1.0370);">50,00 €</span>
<span class="t" style="left:1880.20px;top:971.30px;font-size:16.4px;line-height:16.4px;font-weight:700;color:#ffffff;transform:scaleX(1.0370);">0,00 €</span>
<span class="t" style="left:2062.60px;top:971.30px;font-size:16.4px;line-height:16.4px;font-weight:700;color:#ffffff;transform:scaleX(1.0370);">0.00 €</span>
</body>
</html>
